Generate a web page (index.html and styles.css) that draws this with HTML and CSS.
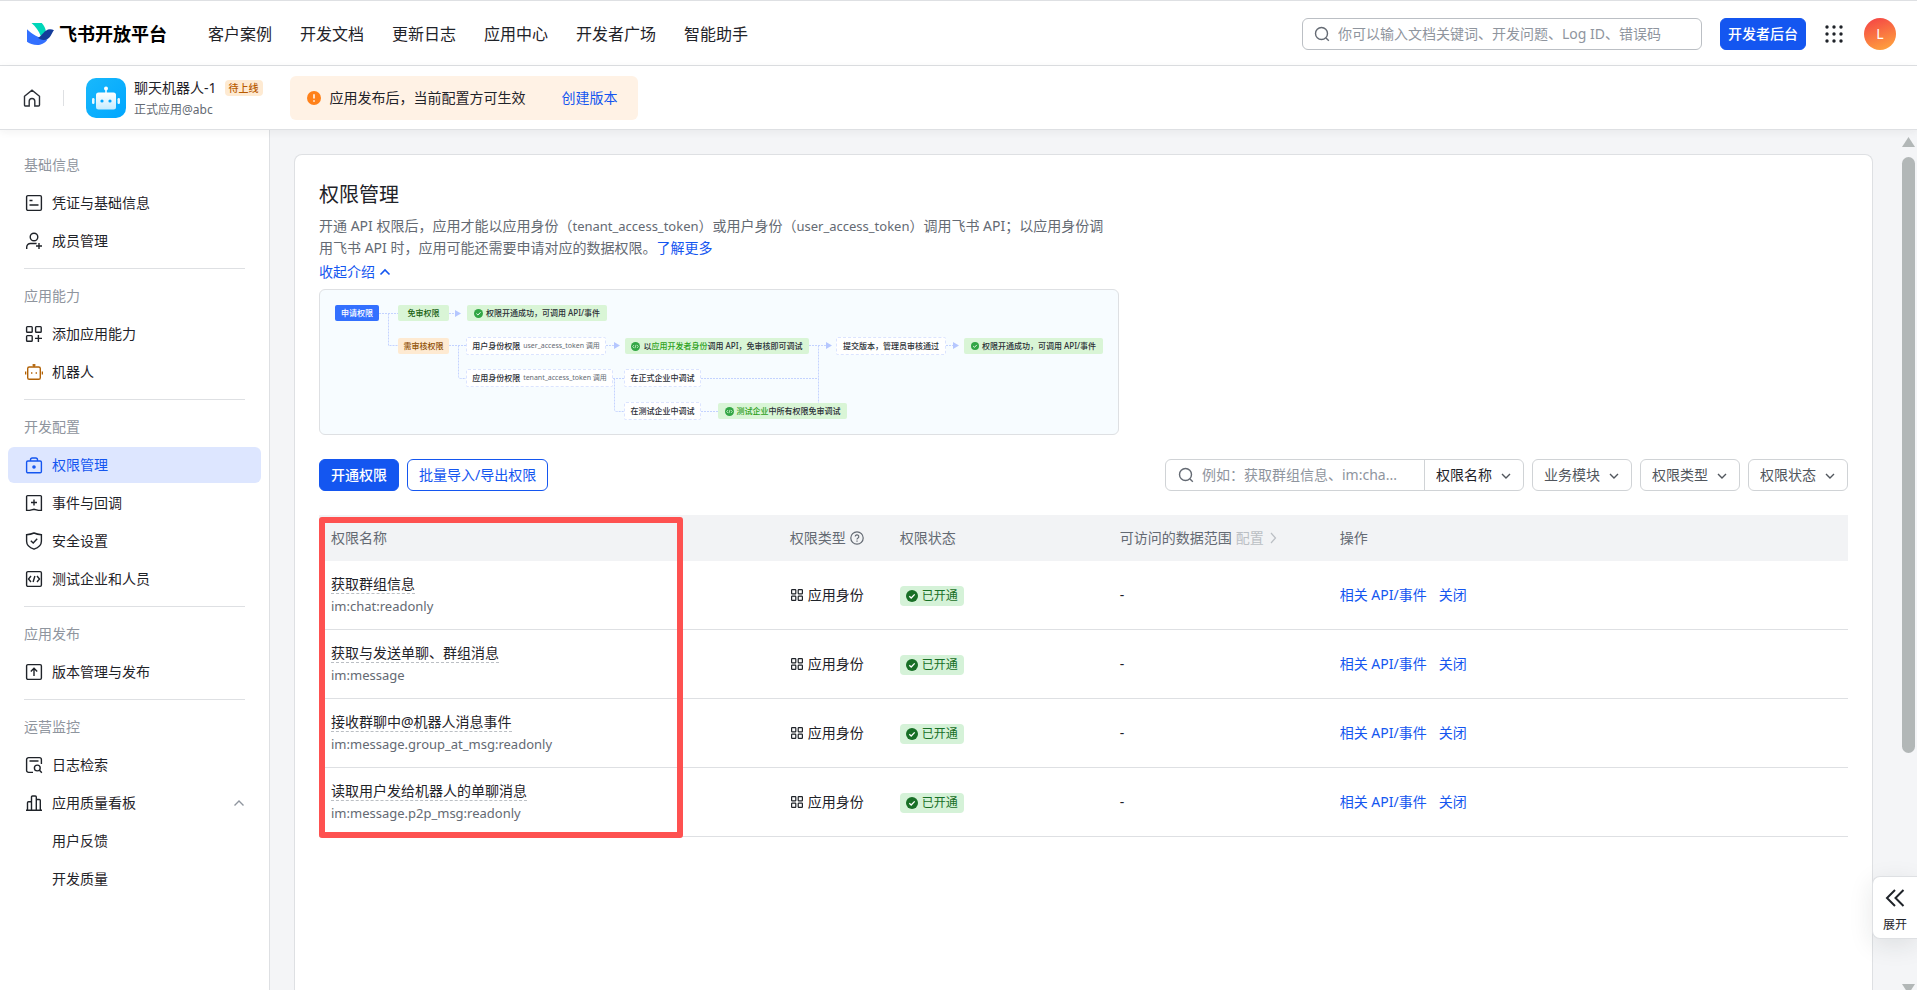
FILE: index.html
```html
<!DOCTYPE html>
<html lang="zh-CN">
<head>
<meta charset="utf-8">
<title>权限管理 - 飞书开放平台</title>
<link rel="stylesheet" href="styles.css">
</head>
<body>
<svg class="defs" aria-hidden="true">
  <symbol id="i-down" viewBox="0 0 12 12"><path d="M2 4l4 4 4-4"/></symbol>
  <symbol id="i-up" viewBox="0 0 12 12"><path d="M1.500 8.500l4.500-4.500 4.500 4.500"/></symbol>
  <symbol id="i-search" viewBox="0 0 16 16"><circle cx="7.500" cy="7.500" r="6"/><path d="M12 12l2.800 2.800"/></symbol>
  <symbol id="i-grid" viewBox="0 0 12 12"><rect x=".6" y=".6" width="4.200" height="4.200" rx=".6"/><rect x="7.200" y=".6" width="4.200" height="4.200" rx=".6"/><rect x=".6" y="7.200" width="4.200" height="4.200" rx=".6"/><rect x="7.200" y="7.200" width="4.200" height="4.200" rx=".6"/></symbol>
  <symbol id="i-done" viewBox="0 0 12 12"><circle cx="6" cy="6" r="6" fill="currentColor"/><path d="M3.300 6.200l1.900 1.800 3.500-3.600" fill="none" stroke="#fff" stroke-width="1.300"/></symbol>
  <symbol id="i-code" viewBox="0 0 12 12"><circle cx="6" cy="6" r="6" fill="currentColor"/><path d="M4 4L2.300 6 4 8M8 4l1.700 2L8 8M5.300 8.300l1.400-4.600" fill="none" stroke="#d9f5d6" stroke-width="1"/></symbol>
</svg>

<header class="topbar">
  <a class="brand" href="#">
    <svg class="brand-mark" viewBox="0 0 27 22" aria-hidden="true">
      <path d="M4.500 0h10.300c2.400 2.600 3.600 5.400 4.100 8.200l-5 5C12 8 8.500 3.300 4.500 0z" fill="#00d6b9"/>
      <path d="M0 6.300c5 4.700 11.500 9 20.500 10.200C17.500 20.700 13.800 22 10.500 22 6 22 2.300 20.500 0 18.800z" fill="#3370ff"/>
      <path d="M27 7.200c-2.500 2-3.200 9.800-10.300 9.800-2.600 0-4.600-1.100-5.700-2.300 4.200-1.800 6.200-8.300 12-8.500 1.600 0 2.900.4 4 1z" fill="#133c9a"/>
    </svg>
    <span>飞书开放平台</span>
  </a>
  <nav class="topnav">
    <a href="#">客户案例</a><a href="#">开发文档</a><a href="#">更新日志</a><a href="#">应用中心</a><a href="#">开发者广场</a><a href="#">智能助手</a>
  </nav>
  <div class="top-tools">
    <label class="search search-top">
      <svg class="line-icon" width="16" height="16"><use href="#i-search"/></svg>
      <input type="text" aria-label="搜索" placeholder="你可以输入文档关键词、开发问题、Log ID、错误码">
    </label>
    <button class="btn btn-primary btn-console">开发者后台</button>
    <button class="icon-btn" aria-label="应用列表">
      <svg width="18" height="18" viewBox="0 0 18 18" fill="#1f2329"><circle cx="2" cy="2" r="1.700"/><circle cx="9" cy="2" r="1.700"/><circle cx="16" cy="2" r="1.700"/><circle cx="2" cy="9" r="1.700"/><circle cx="9" cy="9" r="1.700"/><circle cx="16" cy="9" r="1.700"/><circle cx="2" cy="16" r="1.700"/><circle cx="9" cy="16" r="1.700"/><circle cx="16" cy="16" r="1.700"/></svg>
    </button>
    <button class="avatar">L</button>
  </div>
</header>

<div class="appbar">
  <a class="home" href="#" aria-label="首页">
    <svg class="line-icon" width="18" height="18" viewBox="0 0 18 18"><path d="M1.500 7.300L9 1.200l7.500 6.100V16a1 1 0 0 1-1 1h-3.700v-4.700a2.800 2.800 0 0 0-5.600 0V17H2.500a1 1 0 0 1-1-1z"/></svg>
  </a>
  <span class="bar-split"></span>
  <svg class="app-logo" viewBox="0 0 40 40" aria-hidden="true">
    <defs>
      <linearGradient id="g-app" x1="0" y1="0" x2="1" y2="1"><stop offset="0" stop-color="#19b8fb"/><stop offset="1" stop-color="#00a6ff"/></linearGradient>
      <linearGradient id="g-bot" x1="0" y1="0" x2="0" y2="1"><stop offset="0" stop-color="#fff"/><stop offset="1" stop-color="#c4ecff"/></linearGradient>
    </defs>
    <rect width="40" height="40" rx="10" fill="url(#g-app)"/>
    <circle cx="20" cy="10.500" r="2" fill="#fff"/><path d="M20 11v5" stroke="#fff" stroke-width="1.500"/>
    <rect x="10" y="14.500" width="20" height="17" rx="2.500" fill="url(#g-bot)"/>
    <rect x="6" y="20" width="2.500" height="6" rx="1.200" fill="#e8f8ff"/><rect x="31.500" y="20" width="2.500" height="6" rx="1.200" fill="#e8f8ff"/>
    <circle cx="16" cy="23" r="1.600" fill="#00a6ff"/><circle cx="24" cy="23" r="1.600" fill="#00a6ff"/>
  </svg>
  <div class="app-info">
    <div class="app-name">聊天机器人-1<span class="app-tag">待上线</span></div>
    <div class="app-sub">正式应用@abc</div>
  </div>
  <div class="notice">
    <svg width="14" height="14" viewBox="0 0 14 14" aria-hidden="true"><circle cx="7" cy="7" r="7" fill="#ff811a"/><path d="M7 3.300v4.200M7 9.200v1.500" stroke="#fff" stroke-width="1.500"/></svg>
    <span>应用发布后，当前配置方可生效</span>
    <a href="#">创建版本</a>
  </div>
</div>

<div class="body">
  <aside class="sidebar">
    <section class="group">
      <h2>基础信息</h2>
      <a class="item" href="#"><svg class="line-icon" width="18" height="18" viewBox="0 0 18 18"><rect x="1.600" y="1.600" width="14.800" height="14.800" rx="1.300"/><path d="M4.500 6.500h3M4.500 11h9"/></svg>凭证与基础信息</a>
      <a class="item" href="#"><svg class="line-icon" width="18" height="18" viewBox="0 0 18 18"><circle cx="9" cy="5" r="3.800"/><path d="M1.700 17v-1.800a3.700 3.700 0 0 1 3.700-3.700h6.200M14 11v6M11 14h6"/></svg>成员管理</a>
    </section>
    <section class="group">
      <h2>应用能力</h2>
      <a class="item" href="#"><svg class="line-icon" width="18" height="18" viewBox="0 0 18 18"><rect x="1.600" y="1.600" width="5.600" height="5.600" rx=".8"/><rect x="10.600" y="1.600" width="5.600" height="5.600" rx=".8"/><rect x="1.600" y="10.600" width="5.600" height="5.600" rx=".8"/><path d="M13.400 10v7M10 13.400h7"/></svg>添加应用能力</a>
      <a class="item" href="#"><svg class="line-icon bot" width="18" height="18" viewBox="0 0 18 18"><rect x="2.700" y="4" width="12.600" height="12.300" rx="1.600"/><path d="M9 1v3M7.500 2h3M.6 8.500v3M17.400 8.500v3M6.700 9.200v1.600M11.300 9.200v1.600"/></svg>机器人</a>
    </section>
    <section class="group">
      <h2>开发配置</h2>
      <a class="item active" href="#"><svg class="line-icon" width="18" height="18" viewBox="0 0 18 18"><rect x="1.600" y="5" width="14.800" height="11.800" rx="1.300"/><path d="M5.500 5V3.800A1.800 1.800 0 0 1 7.300 2h3.400a1.800 1.800 0 0 1 1.800 1.800V5"/><circle cx="9" cy="11" r="1.100" fill="currentColor"/></svg>权限管理</a>
      <a class="item" href="#"><svg class="line-icon" width="18" height="18" viewBox="0 0 18 18"><path d="M2.600 1.600h12.800a1 1 0 0 1 1 1v13.800h-3L9 15.200l-4.400 1.200h-3V2.600a1 1 0 0 1 1-1zM9 5.500v6M6 8.500h6"/></svg>事件与回调</a>
      <a class="item" href="#"><svg class="line-icon" width="18" height="18" viewBox="0 0 18 18"><path d="M9 1c2.400 1 4.800 1.500 7.400 1.700v6.500c0 4-3.400 6.600-7.400 8-4-1.400-7.400-4-7.400-8V2.700C4.200 2.500 6.600 2 9 1zM5.800 8.700l2.400 2.300 4-4.300"/></svg>安全设置</a>
      <a class="item" href="#"><svg class="line-icon" width="18" height="18" viewBox="0 0 18 18"><rect x="1.600" y="1.600" width="14.800" height="14.800" rx="1.300"/><path d="M6 6L3.500 9 6 12M12 6l2.500 3-2.500 3M8.100 12l1.800-6"/></svg>测试企业和人员</a>
    </section>
    <section class="group">
      <h2>应用发布</h2>
      <a class="item" href="#"><svg class="line-icon" width="18" height="18" viewBox="0 0 18 18"><rect x="1.600" y="1.600" width="14.800" height="14.800" rx="1.300"/><path d="M9 13V5.500M5.800 8.500L9 5.300l3.200 3.200"/></svg>版本管理与发布</a>
    </section>
    <section class="group">
      <h2>运营监控</h2>
      <a class="item" href="#"><svg class="line-icon" width="18" height="18" viewBox="0 0 18 18"><path d="M8 16.400H3.600a2 2 0 0 1-2-2V3.600a2 2 0 0 1 2-2h10.800a2 2 0 0 1 2 2V8M4.500 5h9"/><circle cx="12.300" cy="12" r="2.900"/><path d="M14.500 14.300l2.300 2.500"/></svg>日志检索</a>
      <a class="item" href="#"><svg class="line-icon" width="18" height="18" viewBox="0 0 18 18"><path d="M1 16.200h16M2.500 16V8.800a1 1 0 0 1 1-1h3v8.200M6.500 16V3a1 1 0 0 1 1-1h2.800a1 1 0 0 1 1 1v13M11.300 5.500h3a1 1 0 0 1 1 1V16"/></svg>应用质量看板<svg class="line-icon fold" width="12" height="12"><use href="#i-up"/></svg></a>
      <a class="item sub" href="#">用户反馈</a>
      <a class="item sub" href="#">开发质量</a>
    </section>
  </aside>

  <main class="content">
    <div class="card">
      <h1>权限管理</h1>
      <p class="desc">开通 API 权限后，应用才能以应用身份（<code>tenant_access_token</code>）或用户身份（<code>user_access_token</code>）调用飞书 API；以应用身份调用飞书 API 时，应用可能还需要申请对应的数据权限。<a href="#">了解更多</a></p>
      <button class="toggle">收起介绍<svg class="line-icon" width="12" height="12"><use href="#i-up"/></svg></button>

      <div class="flow">
        <svg class="flow-lines" width="798" height="144" viewBox="0 0 798 144" aria-hidden="true">
          <g fill="none" stroke="#c4d3ff" stroke-dasharray="2 1">
            <path d="M59 23.500h19M68.500 23.500v32h9.500M129 23.500h6M129 55.500h18M138.500 55.500v31q0 2 2 2h6.500M286 55.500h8M293 88.500h11M294.500 88.500v31q0 2 2 2h7.500M381 88.500h117.500M381 121.500h17M489 55.500h17M498.500 55.500v58M626 55.500h7"/>
          </g>
          <path fill="#b5c7ff" d="M135 20l6 3.500-6 3.500zM294 52l6 3.500-6 3.500zM506 52l6 3.500-6 3.500zM633 52l6 3.500-6 3.500z"/>
        </svg>
        <span class="node blue n-apply">申请权限</span>
        <span class="node green n-free">免审权限</span>
        <span class="node ok n-ok1"><svg width="9" height="9"><use href="#i-done"/></svg><span>权限开通成功，可调用 API/事件</span></span>
        <span class="node orange n-review">需审核权限</span>
        <span class="node white n-user">用户身份权限 <small>user_access_token 调用</small></span>
        <span class="node ok n-dev"><svg width="9" height="9"><use href="#i-code"/></svg><span>以<em>应用开发者身份</em>调用 API，免审核即可调试</span></span>
        <span class="node white n-submit">提交版本，管理员审核通过</span>
        <span class="node ok n-ok2"><svg width="8" height="8"><use href="#i-done"/></svg><span>权限开通成功，可调用 API/事件</span></span>
        <span class="node white n-tenant">应用身份权限 <small>tenant_access_token 调用</small></span>
        <span class="node white n-formal">在正式企业中调试</span>
        <span class="node white n-test">在测试企业中调试</span>
        <span class="node ok n-all"><svg width="9" height="9"><use href="#i-code"/></svg><span><em>测试企业</em>中所有权限免审调试</span></span>
      </div>

      <div class="actions">
        <button class="btn btn-primary">开通权限</button>
        <button class="btn btn-outline">批量导入/导出权限</button>
        <div class="filters">
          <div class="combo">
            <label class="search">
              <svg class="line-icon" width="16" height="16"><use href="#i-search"/></svg>
              <input type="text" aria-label="搜索权限" placeholder="例如：获取群组信息、im:cha...">
            </label>
            <div class="select dark"><select aria-label="搜索字段"><option>权限名称</option></select><svg class="line-icon" width="12" height="12"><use href="#i-down"/></svg></div>
          </div>
          <div class="select boxed"><select aria-label="业务模块"><option>业务模块</option></select><svg class="line-icon" width="12" height="12"><use href="#i-down"/></svg></div>
          <div class="select boxed"><select aria-label="权限类型"><option>权限类型</option></select><svg class="line-icon" width="12" height="12"><use href="#i-down"/></svg></div>
          <div class="select boxed"><select aria-label="权限状态"><option>权限状态</option></select><svg class="line-icon" width="12" height="12"><use href="#i-down"/></svg></div>
        </div>
      </div>

      <div class="table-wrap">
        <table>
          <colgroup><col class="c-name"><col class="c-type"><col class="c-state"><col class="c-range"><col></colgroup>
          <thead>
            <tr>
              <th>权限名称</th>
              <th><span class="inline">权限类型<svg class="line-icon" width="14" height="14" viewBox="0 0 14 14"><circle cx="7" cy="7" r="6.200"/><path d="M5.200 5.600a1.800 1.800 0 1 1 2.600 1.600c-.6.300-.8.600-.8 1.200M7 9.500v1.200"/></svg></span></th>
              <th>权限状态</th>
              <th><span class="inline">可访问的数据范围<button class="config" disabled>配置<svg class="line-icon" width="12" height="12" viewBox="0 0 12 12"><path d="M3 1l4.500 5L3 11"/></svg></button></span></th>
              <th>操作</th>
            </tr>
          </thead>
          <tbody>
            <tr>
              <td><span class="pname">获取群组信息</span><code class="pcode">im:chat:readonly</code></td>
              <td><span class="inline"><svg class="line-icon" width="12" height="12"><use href="#i-grid"/></svg>应用身份</span></td>
              <td><span class="state"><svg width="12" height="12"><use href="#i-done"/></svg>已开通</span></td>
              <td>-</td>
              <td><a href="#">相关 API/事件</a><a href="#">关闭</a></td>
            </tr>
            <tr>
              <td><span class="pname">获取与发送单聊、群组消息</span><code class="pcode">im:message</code></td>
              <td><span class="inline"><svg class="line-icon" width="12" height="12"><use href="#i-grid"/></svg>应用身份</span></td>
              <td><span class="state"><svg width="12" height="12"><use href="#i-done"/></svg>已开通</span></td>
              <td>-</td>
              <td><a href="#">相关 API/事件</a><a href="#">关闭</a></td>
            </tr>
            <tr>
              <td><span class="pname">接收群聊中@机器人消息事件</span><code class="pcode">im:message.group_at_msg:readonly</code></td>
              <td><span class="inline"><svg class="line-icon" width="12" height="12"><use href="#i-grid"/></svg>应用身份</span></td>
              <td><span class="state"><svg width="12" height="12"><use href="#i-done"/></svg>已开通</span></td>
              <td>-</td>
              <td><a href="#">相关 API/事件</a><a href="#">关闭</a></td>
            </tr>
            <tr>
              <td><span class="pname">读取用户发给机器人的单聊消息</span><code class="pcode">im:message.p2p_msg:readonly</code></td>
              <td><span class="inline"><svg class="line-icon" width="12" height="12"><use href="#i-grid"/></svg>应用身份</span></td>
              <td><span class="state"><svg width="12" height="12"><use href="#i-done"/></svg>已开通</span></td>
              <td>-</td>
              <td><a href="#">相关 API/事件</a><a href="#">关闭</a></td>
            </tr>
          </tbody>
        </table>
        <div class="marker"></div>
      </div>
    </div>
    <div class="scrollbar" aria-hidden="true"><i class="arrow-up"></i><i class="thumb"></i><i class="arrow-down"></i></div>
    <button class="expand"><svg class="line-icon" width="20" height="18" viewBox="0 0 20 18"><path d="M10 1L2 9l8 8M18.500 1l-8 8 8 8"/></svg>展开</button>
  </main>
</div>
</body>
</html>
```
FILE: styles.css
```css
* { box-sizing: border-box; }

body {
  margin: 0;
  height: 100vh;
  display: flex;
  flex-direction: column;
  overflow: hidden;
  border-top: 1px solid #dee0e3;
  background: #fff;
  color: #1f2329;
  font: 14px/22px "Noto Sans", "Noto Sans CJK SC", sans-serif;
}

a { color: #1456f0; text-decoration: none; }
h1, h2, p { margin: 0; font-weight: 400; }
code { font-family: inherit; font-size: 13px; }
button, input, select { font: inherit; color: inherit; margin: 0; padding: 0; border: 0; background: none; }
button { cursor: pointer; }
svg { flex: none; display: block; }
.defs { position: absolute; width: 0; height: 0; }
.line-icon { fill: none; stroke: currentColor; stroke-width: 1.4; }

/* Top bar */
.topbar {
  flex: none;
  display: flex;
  align-items: center;
  height: 65px;
  padding: 2px 21px 0 27px;
  border-bottom: 1px solid #dee0e3;
}
.brand { display: flex; align-items: center; gap: 5px; color: #000; font-size: 18px; font-weight: 700; line-height: 26px; }
.brand-mark { width: 27px; height: 22px; }
.topnav { display: flex; gap: 28px; margin-left: 41px; font-size: 16px; line-height: 24px; white-space: nowrap; }
.topnav a { color: #1f2329; }
.top-tools { display: flex; align-items: center; margin-left: auto; gap: 18px; }
.search { display: flex; align-items: center; gap: 8px; height: 30px; padding: 0 12px; color: #646a73; }
.search input { flex: 1; min-width: 0; outline: 0; }
.search input::placeholder { color: #8f959e; opacity: 1; }
.search-top { width: 400px; height: 32px; border: 1px solid #bbbfc4; border-radius: 6px; padding: 0 11px; }
.btn { height: 32px; padding: 0 11px; border: 1px solid #1456f0; border-radius: 6px; white-space: nowrap; }
.btn-primary { background: #1456f0; color: #fff; font-weight: 500; }
.btn-outline { color: #1456f0; background: #fff; }
.btn-console { padding: 0 7px; }
.icon-btn { padding: 0 3px 0 1px; }
.avatar { width: 32px; height: 32px; border-radius: 50%; background: linear-gradient(160deg, #f54a45 10%, #ffa53d 95%); color: #fff; }

/* Application bar */
.appbar {
  flex: none;
  display: flex;
  align-items: center;
  height: 64px;
  padding: 0 23px;
  border-bottom: 1px solid #dee0e3;
  box-shadow: 0 2px 8px rgba(31, 35, 41, .06);
  position: relative;
  z-index: 1;
  background: #fff;
}
.home { color: #2b2f36; }
.bar-split { width: 1px; height: 16px; margin: 0 22px; background: #dee0e3; }
.app-logo { width: 40px; height: 40px; }
.app-info { margin: 0 27px 0 8px; padding-top: 2px; white-space: nowrap; }
.app-name { display: flex; align-items: center; gap: 8px; }
.app-tag { padding: 0 4px; border-radius: 4px; background: #feead2; color: #b85a00; font-size: 10px; line-height: 16px; font-weight: 500; }
.app-sub { margin-top: 1px; color: #646a73; font-size: 12px; line-height: 20px; }
.notice { display: flex; align-items: center; height: 44px; padding: 0 20px 0 17px; border-radius: 6px; background: #fff2e5; }
.notice span { margin: 0 36px 0 9px; }

/* Body */
.body { flex: 1; min-height: 0; display: flex; }
.sidebar { flex: none; width: 270px; padding: 17px 8px 0; border-right: 1px solid #dee0e3; background: #fff; }
.group { display: flex; flex-direction: column; gap: 2px; }
.group + .group::before { content: ""; height: 1px; margin: 9px 16px 7px; background: #dee0e3; }
.group h2 { padding: 0 16px; font-size: 14px; line-height: 36px; color: #8f959e; }
.item { display: flex; align-items: center; gap: 9px; height: 36px; padding: 0 16px 0 17px; border-radius: 6px; color: #1f2329; }
.item.sub { padding-left: 44px; }
.item.active { background: #dde6ff; color: #1456f0; }
.bot { color: #b26206; }
.fold { margin-left: auto; color: #8f959e; }

.content { flex: 1; min-width: 0; display: flex; position: relative; padding: 24px 44px 0 24px; background: #f4f5f7; }
.card { flex: 1; min-width: 0; padding: 24px; border: 1px solid #dee0e3; border-bottom: 0; border-radius: 8px 8px 0 0; background: #fff; }
.card h1 { font-size: 20px; line-height: 32px; }
.desc { max-width: 792px; margin-top: 4px; color: #646a73; }
.toggle { display: flex; align-items: center; gap: 4px; margin-top: 2px; color: #1456f0; }
.toggle svg { stroke-width: 1.6; }

/* Permission flow diagram */
.flow { position: relative; max-width: 800px; height: 146px; margin-top: 6px; border: 1px solid #dee0e3; border-radius: 6px; background: #f7fcff; overflow: hidden; }
.flow-lines { position: absolute; left: 0; top: 0; }
.node { position: absolute; display: flex; align-items: center; justify-content: center; gap: 3px; height: 16px; border-radius: 2px; font-size: 8px; font-weight: 500; line-height: 16px; white-space: nowrap; color: #2b2f36; }
.node em { font-style: normal; color: #2ea121; }
.node small { font-size: 7px; font-weight: 400; color: #646a73; }
.blue { background: #3370ff; color: #fff; }
.green { background: #d9f5d6; color: #186010; }
.orange { background: #feead2; color: #8f4f04; }
.ok { background: #d9f5d6; }
.ok svg { color: #32a645; }
.white { height: 18px; border: 1px dashed #dbe4ff; background: #fff; }
.n-apply { left: 15px; top: 15px; width: 44px; }
.n-free { left: 78px; top: 15px; width: 51px; }
.n-ok1 { left: 147px; top: 15px; width: 140px; }
.n-review { left: 78px; top: 48px; width: 51px; }
.n-user { left: 146px; top: 47px; width: 140px; }
.n-dev { left: 305px; top: 48px; width: 184px; }
.n-submit { left: 516px; top: 47px; width: 110px; }
.n-ok2 { left: 644px; top: 48px; width: 139px; }
.n-tenant { left: 146px; top: 79px; width: 147px; }
.n-formal { left: 304px; top: 79px; width: 77px; }
.n-test { left: 304px; top: 112px; width: 77px; }
.n-all { left: 398px; top: 113px; width: 129px; }

/* Actions and filters */
.actions { display: flex; gap: 8px; margin-top: 24px; }
.filters { display: flex; gap: 8px; margin-left: auto; }
.combo { display: flex; height: 32px; border: 1px solid #d0d3d6; border-radius: 6px; }
.combo .search { width: 259px; border-right: 1px solid #d0d3d6; }
.combo .select { width: 98px; }
.select { position: relative; width: 100px; color: #51565d; }
.select select { width: 100%; height: 100%; padding: 0 28px 0 11px; appearance: none; outline: 0; }
.select svg { position: absolute; right: 11px; top: 10px; pointer-events: none; color: #51565d; }
.dark { color: #1f2329; }
.boxed { height: 32px; border: 1px solid #d0d3d6; border-radius: 6px; }

/* Table */
.table-wrap { position: relative; margin-top: 24px; }
table { width: 100%; table-layout: fixed; border-collapse: separate; border-spacing: 0; }
.c-name { width: 30%; }
.c-type { width: 110px; }
.c-state, .c-range { width: 220px; }
th, td { padding: 0 12px; text-align: left; white-space: nowrap; }
th { height: 46px; background: #f2f3f5; color: #646a73; font-weight: 400; }
td { height: 69px; border-bottom: 1px solid #dee0e3; }
td a + a { margin-left: 12px; }
.inline { display: flex; align-items: center; gap: 4px; }
.inline svg { stroke-width: 1.2; }
td .inline { gap: 5px; padding-left: 1px; }
.config { display: flex; align-items: center; gap: 4px; color: #bbbfc4; }
.pname { display: block; width: max-content; margin-top: 2px; line-height: 18px; border-bottom: 1px dashed #bbbfc4; }
.pcode { display: block; margin-top: 1px; line-height: 22px; color: #646a73; }
.state { display: flex; align-items: center; gap: 4px; width: max-content; height: 20px; margin-top: 2px; padding: 0 6px; border-radius: 4px; background: #d5f2d8; color: #186f26; font-size: 12px; line-height: 20px; }
.marker { position: absolute; left: 0; top: 2px; width: 364px; bottom: -1px; border: 6px solid #fe5150; border-radius: 3px; pointer-events: none; }

/* Scrollbar and side tab */
.scrollbar { position: absolute; top: 7px; right: 2px; bottom: -4px; width: 13px; display: flex; flex-direction: column; }
.arrow-up, .arrow-down { height: 10px; background: #b2b7b7; clip-path: polygon(50% 0, 100% 100%, 0 100%); }
.arrow-down { clip-path: polygon(0 0, 100% 0, 50% 100%); margin-top: auto; }
.thumb { height: calc(70% - 4px); margin-top: 10px; border-radius: 7px; background: #b2b7b7; }
.expand { position: absolute; right: 0; bottom: 51px; width: 45px; height: 63px; display: flex; flex-direction: column; align-items: center; gap: 9px; padding-top: 12px; border: 1px solid #dee0e3; border-right: 0; border-radius: 8px 0 0 8px; background: #fff; box-shadow: 0 6px 24px rgba(31, 35, 41, .1); font-size: 12px; line-height: 18px; }
.expand svg { stroke-width: 2; }
```
